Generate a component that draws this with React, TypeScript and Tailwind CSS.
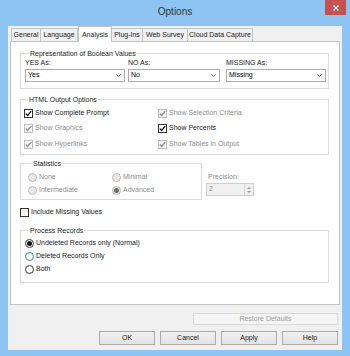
import React from 'react';

const font = { fontFamily: '"Liberation Sans", Arial, sans-serif' };

function Check({ checked, disabled }: { checked?: boolean; disabled?: boolean }) {
  return (
    <span
      className={`flex h-[9px] w-[9px] shrink-0 items-center justify-center border ${
        disabled ? 'border-[#bcbcbc] bg-[#f4f4f4]' : 'border-[#333] bg-white'
      }`}
    >
      {checked && (
        <svg width="7" height="7" viewBox="0 0 7 7">
          <polyline
            points="0.8,3.6 2.7,5.5 6.2,1.2"
            fill="none"
            stroke={disabled ? '#8c8c8c' : '#111'}
            strokeWidth="1.3"
          />
        </svg>
      )}
    </span>
  );
}

function CheckRow({ label, checked, disabled }: { label: string; checked?: boolean; disabled?: boolean }) {
  return (
    <div className="flex h-[10px] items-center gap-[2px]">
      <Check checked={checked} disabled={disabled} />
      <span className={disabled ? 'text-[#8d8d8d]' : 'text-[#1a1a1a]'}>{label}</span>
    </div>
  );
}

function Radio({ label, checked, disabled, focus }: { label: string; checked?: boolean; disabled?: boolean; focus?: boolean }) {
  return (
    <div className="flex h-[10px] items-center gap-[2px]">
      <span
        className={`flex h-[9px] w-[9px] shrink-0 items-center justify-center rounded-full border ${
          disabled
            ? 'border-[#bcbcbc] bg-[#e8e8e8]'
            : focus
            ? 'border-[#3c7fb1] bg-white'
            : 'border-[#333] bg-white'
        }`}
      >
        {checked && <span className={`h-[5px] w-[5px] rounded-full ${disabled ? 'bg-[#6e6e6e]' : 'bg-[#111]'}`} />}
      </span>
      <span className={disabled ? 'text-[#8d8d8d]' : 'text-[#1a1a1a]'}>{label}</span>
    </div>
  );
}

function Select({ value, w }: { value: string; w: string }) {
  return (
    <div className={`mt-[2px] flex h-[13px] items-center justify-between border border-[#acacac] bg-white pl-[2px] pr-[3px] ${w}`}>
      <span>{value}</span>
      <svg width="5" height="3" viewBox="0 0 5 3">
        <polyline points="0.3,0.3 2.5,2.5 4.7,0.3" fill="none" stroke="#444" strokeWidth="0.9" />
      </svg>
    </div>
  );
}

function Group({ title, className, children }: { title: string; className: string; children: React.ReactNode }) {
  return (
    <fieldset className={`border border-[#dcdcdc] ${className}`}>
      <legend className="ml-[4px] px-[1px] leading-[9px] text-[#1a1a1a]">{title}</legend>
      {children}
    </fieldset>
  );
}

function Btn({ label, w, disabled }: { label: string; w: string; disabled?: boolean }) {
  return (
    <div
      className={`flex items-center justify-center border ${w} ${
        disabled
          ? 'h-[12px] border-[#d9d9d9] bg-[#f4f4f4] text-[#a0a0a0]'
          : 'h-[14px] border-[#acacac] bg-gradient-to-b from-[#f0f0f0] to-[#e3e3e3] text-[#1a1a1a]'
      }`}
    >
      {label}
    </div>
  );
}

const tabs = [
  { name: 'General', w: 'w-[30px]' },
  { name: 'Language', w: 'w-[37px]' },
  { name: 'Analysis', w: 'w-[34px]', active: true },
  { name: 'Plug-Ins', w: 'w-[31px]' },
  { name: 'Web Survey', w: 'w-[45px]' },
  { name: 'Cloud Data Capture', w: 'w-[65px]' },
];

export default function App() {
  return (
    <div className="flex h-[356px] w-[350px] flex-col bg-[#8ec4f1] text-[7px]" style={font}>
      <div className="relative flex h-[26px] shrink-0 items-start justify-center pt-[4px]">
        <span className="text-[10px] text-[#333]">Options</span>
        <div className="absolute right-[4px] top-0 flex h-[15px] w-[21px] items-center justify-center bg-[#c75050]">
          <svg width="6" height="6" viewBox="0 0 6 6">
            <path d="M0.5 0.5 L5.5 5.5 M5.5 0.5 L0.5 5.5" stroke="white" strokeWidth="1.4" />
          </svg>
        </div>
      </div>

      <div className="ml-[8px] flex h-[324px] w-[334px] flex-col bg-[#f0f0f0]">
        <div className="flex h-[15px] items-end pl-[3px]">
          {tabs.map((t) =>
            t.active ? (
              <div
                key={t.name}
                className={`relative z-10 -mb-px flex h-[16px] items-start justify-center border border-b-0 border-[#c4c4c4] bg-white pt-[3px] text-[#1a1a1a] ${t.w}`}
              >
                {t.name}
              </div>
            ) : (
              <div
                key={t.name}
                className={`flex h-[13px] items-center justify-center border border-l-0 border-b-0 border-[#c4c4c4] bg-[#f0f0f0] text-[#1a1a1a] first:border-l ${t.w}`}
              >
                {t.name}
              </div>
            )
          )}
        </div>

        <div className="ml-[2px] flex h-[264px] w-[330px] flex-col border border-[#c4c4c4] bg-white pl-[9px] pt-[7px]">
          <Group title="Representation of Boolean Values" className="w-[309px] pb-[6px] pl-[4px]">
            <div className="mt-[1px] flex">
              <div>
                <div className="leading-[8px] text-[#1a1a1a]">YES As:</div>
                <Select value="Yes" w="w-[100px]" />
              </div>
              <div className="ml-[3px]">
                <div className="leading-[8px] text-[#1a1a1a]">NO As:</div>
                <Select value="No" w="w-[92px]" />
              </div>
              <div className="ml-[6px]">
                <div className="leading-[8px] text-[#1a1a1a]">MISSING As:</div>
                <Select value="Missing" w="w-[100px]" />
              </div>
            </div>
          </Group>

          <Group title="HTML Output Options" className="mt-[6px] w-[309px] pb-[5px] pl-[3px]">
            <div className="grid grid-cols-[134px_1fr] gap-y-[5.5px] pt-[4px]">
              <CheckRow label="Show Complete Prompt" checked />
              <CheckRow label="Show Selection Criteria" checked disabled />
              <CheckRow label="Show Graphics" checked disabled />
              <CheckRow label="Show Percents" checked />
              <CheckRow label="Show Hyperlinks" checked disabled />
              <CheckRow label="Show Tables in Output" checked disabled />
            </div>
          </Group>

          <div className="mt-[4px] flex items-start">
            <Group title="Statistics" className="w-[182px] pb-[4px] pl-[7px]">
              <div className="grid grid-cols-[84px_1fr] gap-y-[3px] pt-[4px]">
                <Radio label="None" disabled />
                <Radio label="Minimal" disabled />
                <Radio label="Intermediate" disabled />
                <Radio label="Advanced" checked disabled />
              </div>
            </Group>
            <div className="ml-[4px] pt-[14px]">
              <div className="pl-[2px] leading-[8px] text-[#8d8d8d]">Precision:</div>
              <div className="mt-[2px] flex h-[13px] w-[48px] items-center justify-between border border-[#cfcfcf] bg-[#f0f0f0] pl-[2px] text-[#8d8d8d]">
                <span>2</span>
                <div className="flex h-full w-[9px] flex-col items-center justify-center gap-[2px] border-l border-[#d8d8d8]">
                  <svg width="4" height="2" viewBox="0 0 4 2">
                    <polygon points="0,2 2,0 4,2" fill="#9a9a9a" />
                  </svg>
                  <svg width="4" height="2" viewBox="0 0 4 2">
                    <polygon points="0,0 2,2 4,0" fill="#9a9a9a" />
                  </svg>
                </div>
              </div>
            </div>
          </div>

          <div className="mt-[7px]">
            <CheckRow label="Include Missing Values" />
          </div>

          <Group title="Process Records" className="mt-[9px] w-[309px] pb-[8px] pl-[4px]">
            <div className="flex flex-col gap-[3px] pt-[3px]">
              <Radio label="Undeleted Records only (Normal)" checked />
              <Radio label="Deleted Records Only" focus />
              <Radio label="Both" />
            </div>
          </Group>
        </div>

        <div className="mt-[8px] flex justify-end pr-[4px]">
          <Btn label="Restore Defaults" w="w-[145px]" disabled />
        </div>
        <div className="mt-[6px] flex justify-end gap-[5px] pr-[4px]">
          <Btn label="OK" w="w-[56px]" />
          <Btn label="Cancel" w="w-[56px]" />
          <Btn label="Apply" w="w-[56px]" />
          <Btn label="Help" w="w-[56px]" />
        </div>
      </div>
    </div>
  );
}
